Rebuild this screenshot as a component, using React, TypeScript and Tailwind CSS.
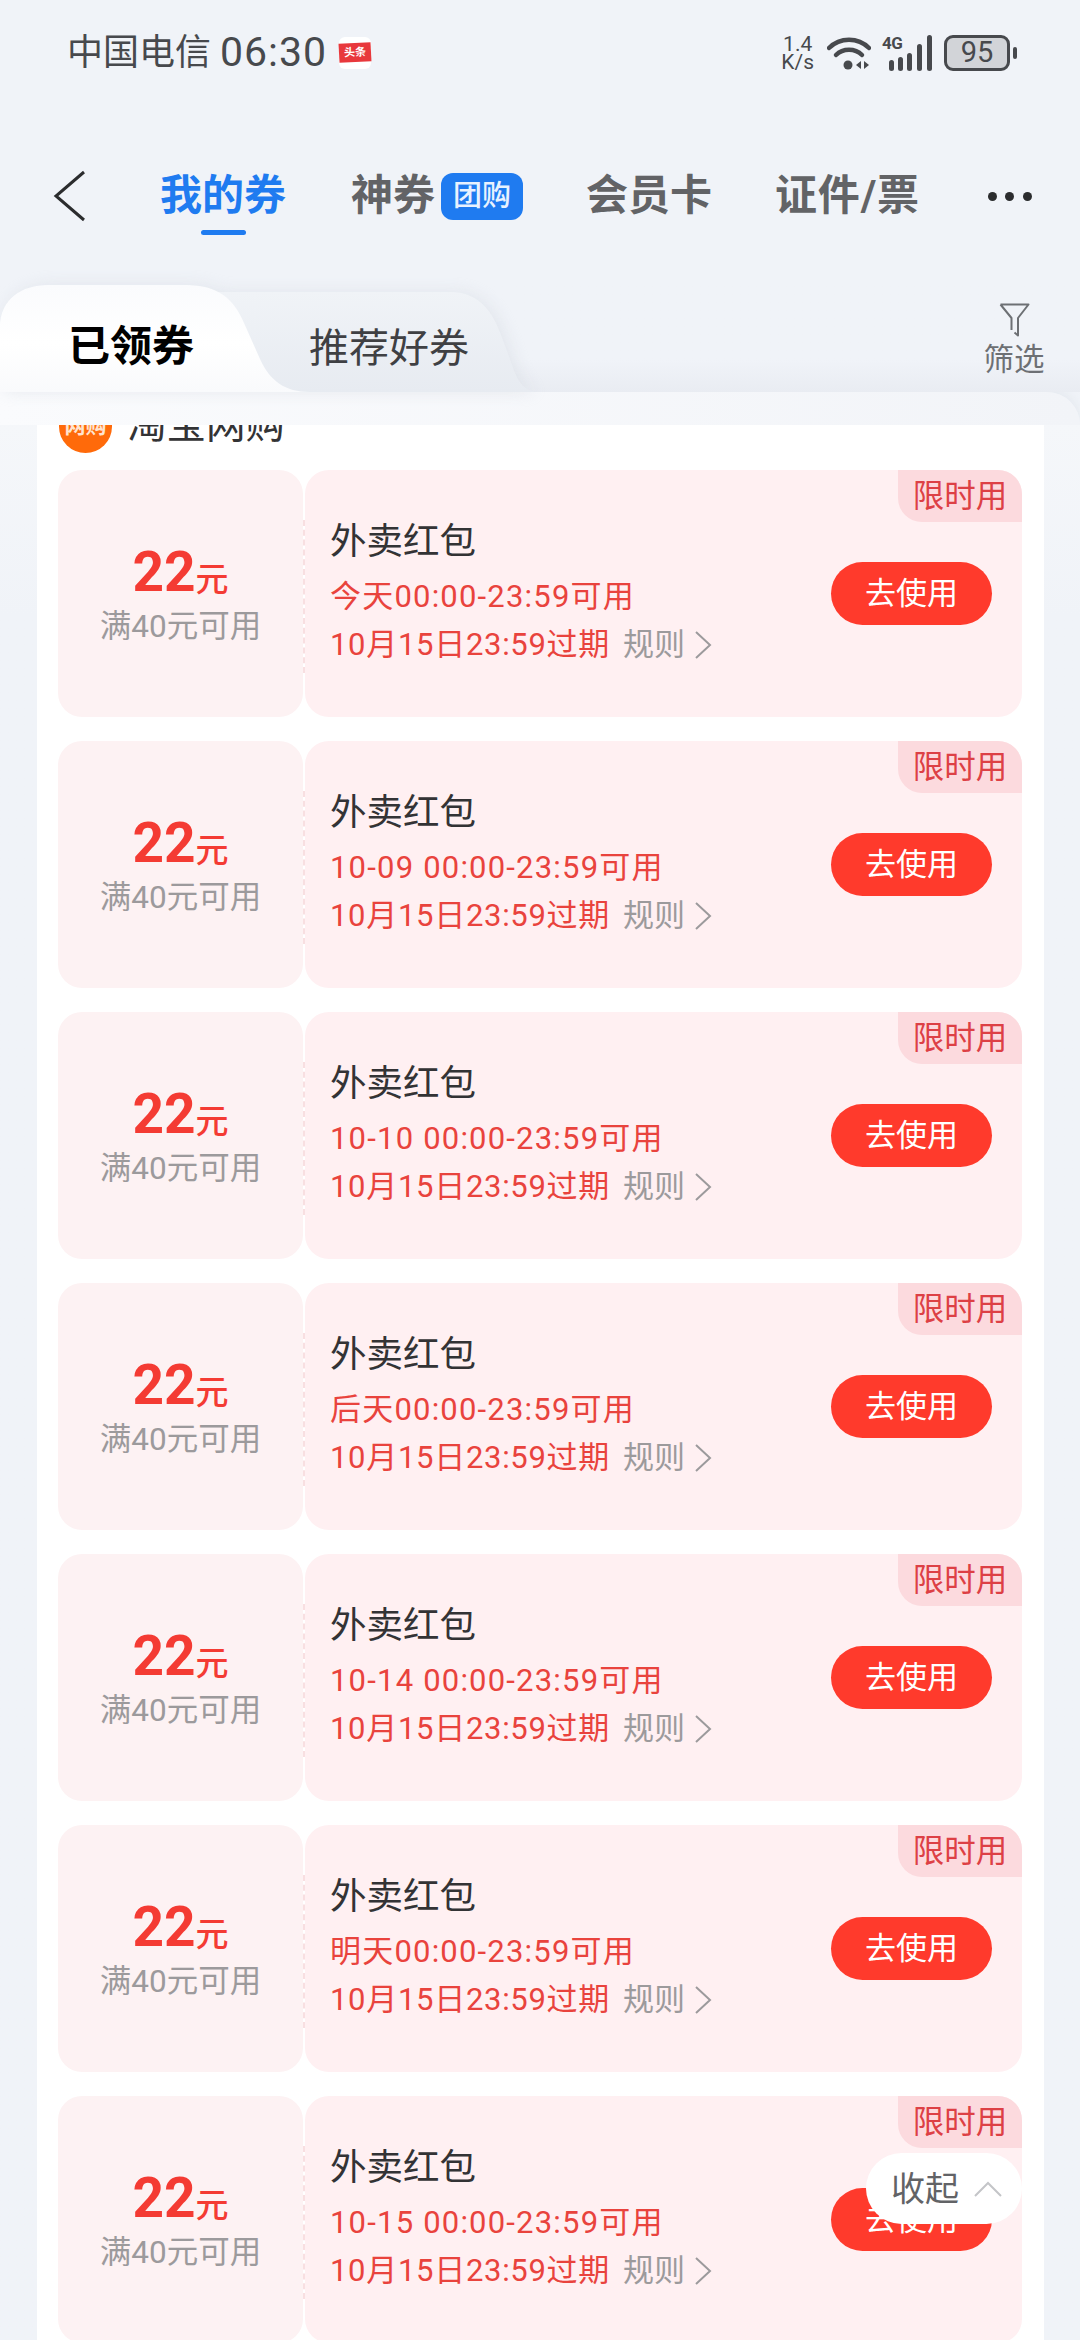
const coupons = [
  "今天00:00-23:59可用",
  "10-09 00:00-23:59可用",
  "10-10 00:00-23:59可用",
  "后天00:00-23:59可用",
  "10-14 00:00-23:59可用",
  "明天00:00-23:59可用",
  "10-15 00:00-23:59可用",
];

const StatusBar = () => (
  <div className="flex h-[105px] items-center pl-[67px] pr-[63px] text-[#47494d]">
    <span className="text-[36px] leading-none">中国电信</span>
    <span className="ml-[9px] text-[41px] leading-none tracking-[1px]">06:30</span>
    <div className="ml-[12px] flex h-[32px] w-[32px] items-center rounded-[6px] bg-white">
      <span className="flex h-[19px] w-full -rotate-3 items-center justify-center bg-[#e8383c] text-[11px] font-bold leading-none text-white">
        头条
      </span>
    </div>
    <div className="ml-auto flex flex-col items-center text-[21px] leading-[18px]">
      <span>1.4</span>
      <span>K/s</span>
    </div>
    <svg className="ml-[13px] h-[36px] w-[44px]" viewBox="0 0 44 36" fill="none">
      <path d="M2 13C13 2 31 2 42 13" stroke="#47494d" strokeWidth="4.5" strokeLinecap="round" />
      <path d="M9 20C16 13 28 13 35 20" stroke="#47494d" strokeWidth="4.5" strokeLinecap="round" />
      <circle cx="21" cy="30" r="4.5" fill="#47494d" />
      <path d="M34 26V34L29 30ZM37 26V34L42 30Z" fill="#47494d" />
    </svg>
    <div className="relative ml-[11px] h-[36px] w-[50px]">
      <span className="absolute left-0 top-0 text-[17px] font-bold leading-[17px] tracking-[-0.5px]">4G</span>
      <svg className="h-full w-full" viewBox="0 0 50 36" fill="#47494d">
        <rect x="7" y="25" width="5" height="11" rx="2.5" />
        <rect x="16" y="22" width="5" height="14" rx="2.5" />
        <rect x="25" y="18" width="5" height="18" rx="2.5" />
        <rect x="35" y="9" width="5" height="27" rx="2.5" />
        <rect x="45" y="0" width="5" height="36" rx="2.5" />
      </svg>
    </div>
    <div className="ml-[12px] flex h-[36px] w-[66px] items-center justify-center rounded-[9px] border-[3px] border-[#47494d] bg-[#d2d4d8] text-[29px] leading-none">
      95
    </div>
    <span className="ml-[3px] h-[12px] w-[4px] rounded-[2px] bg-[#47494d]" />
  </div>
);

const TopNav = () => (
  <div className="relative flex h-[90px] items-center pt-[2px] text-[42px] font-bold leading-none text-[#626366]">
    <svg className="ml-[53px] h-[52px] w-[34px]" viewBox="0 0 34 52" fill="none">
      <path d="M31 2L3 26L31 50" stroke="#2b2c2e" strokeWidth="3" />
    </svg>
    <span className="relative ml-[73px] text-[#1f7bf0]">
      我的券
      <span className="absolute left-[41px] top-[55px] h-[5px] w-[45px] rounded-[3px] bg-[#1f7bf0]" />
    </span>
    <span className="ml-[65px]">神券</span>
    <span className="ml-[6px] flex h-[47px] w-[82px] items-center justify-center rounded-[12px] bg-[#1f7bf0] text-[29px] font-medium text-[#e8f2ff]">
      团购
    </span>
    <span className="ml-[63px]">会员卡</span>
    <span className="ml-[63px] tracking-[0.8px]">证件/票</span>
    <div className="ml-[68px] flex gap-[8.5px]">
      <span className="h-[9px] w-[9px] rounded-full bg-[#2b2c2e]" />
      <span className="h-[9px] w-[9px] rounded-full bg-[#2b2c2e]" />
      <span className="h-[9px] w-[9px] rounded-full bg-[#2b2c2e]" />
    </div>
  </div>
);

const TabHeader = () => (
  <div className="relative h-[107px] bg-gradient-to-b from-[#f0f3f8] via-[#f0f3f8] via-70% to-[#e9ecf2]">
    <svg className="absolute left-0 top-0 h-[107px] w-[560px] drop-shadow-[4px_0_8px_rgba(200,206,216,0.35)]" viewBox="0 0 560 107" fill="none">
      <defs>
        <linearGradient id="tabOff" x1="0" y1="0" x2="0" y2="1">
          <stop offset="0" stopColor="#f0f3f7" />
          <stop offset="1" stopColor="#e7ebf1" />
        </linearGradient>
        <linearGradient id="tabOn" x1="0" y1="0" x2="0" y2="1">
          <stop offset="0" stopColor="#fafbfd" />
          <stop offset="0.55" stopColor="#ffffff" />
          <stop offset="1" stopColor="#f9fafc" />
        </linearGradient>
      </defs>
      <path d="M190 7H450C478 7 492 25 501 50L515 88C519 98 525 105 535 107H190Z" fill="url(#tabOff)" />
      <path d="M0 107V42C0 14 22 0 48 0H186C218 0 234 14 244 38L260 74C270 96 285 107 310 107Z" fill="url(#tabOn)" />
    </svg>
    <div className="absolute left-[68px] top-[35px] text-[42px] font-bold leading-[54px] text-black">已领券</div>
    <div className="absolute left-[309px] top-[37px] text-[40px] leading-[54px] text-[#3f4043]">推荐好券</div>
    <div className="absolute left-[983px] top-[18px] flex w-[62px] flex-col items-center text-[#6d7074]">
      <svg className="h-[34px] w-[31px]" viewBox="0 0 30 34" fill="none">
        <path d="M1 1.5H29L18.5 15V32.5L15 29.5 M1 1.5L12 15V27" stroke="#6d7074" strokeWidth="2" strokeLinejoin="round" />
      </svg>
      <span className="mt-[5px] text-[30.5px] leading-[36px]">筛选</span>
    </div>
  </div>
);

const CouponCard = ({ when }: { when: string }) => (
  <div className="flex h-[247px] shrink-0">
    <div className="flex w-[245px] flex-col items-center rounded-[24px] bg-[#fdf2f3] pt-[72px]">
      <div className="flex h-[60px] items-baseline font-medium text-[#f43b33]">
        <span className="text-[55px] font-bold leading-[60px]">22</span>
        <span className="text-[33px] leading-[60px]">元</span>
      </div>
      <div className="mt-[5px] text-[31.5px] leading-[40px] text-[#9c9a9c]">满40元可用</div>
    </div>
    <div className="relative ml-[2px] flex flex-1 items-center rounded-[24px] bg-[#fff0f2] pl-[25px] pr-[30px]">
      <span className="absolute left-[-2px] top-[50px] h-[153px] border-l-2 border-dashed border-[#f8dfe1]" />
      <span className="absolute right-0 top-0 flex h-[52px] w-[124px] items-center justify-center rounded-bl-[24px] rounded-tr-[24px] bg-[#fcdade] pt-[2px] text-[31.5px] leading-none text-[#dd4045]">
        限时用
      </span>
      <div className="flex flex-col pb-[3px]">
        <div className="text-[36.5px] leading-[50px] text-[#333335]">外卖红包</div>
        <div className="mt-[4px] text-[31px] leading-[52px] tracking-[1.2px] text-[#e9433d]">{when}</div>
        <div className="flex h-[44px] items-center text-[31px] leading-[44px] tracking-[0.7px] text-[#e9433d]">
          10月15日23:59过期
          <span className="ml-[13px] tracking-normal text-[#9c9a9c]">规则</span>
          <svg className="ml-[9px] h-[30px] w-[18px]" viewBox="0 0 18 30" fill="none">
            <path d="M2 2L16 15L2 28" stroke="#9c9a9c" strokeWidth="2" />
          </svg>
        </div>
      </div>
      <button className="ml-auto flex h-[63px] w-[161px] items-center justify-center rounded-full bg-[#ff3a2c] text-[31px] leading-none text-white">
        去使用
      </button>
    </div>
  </div>
);

const App = () => (
  <div className="relative h-[2340px] w-[1080px] overflow-hidden bg-[#f0f3f8] font-['Roboto','Noto_Sans_CJK_SC',sans-serif]">
    <StatusBar />
    <div className="h-[45px]" />
    <TopNav />
    <div className="h-[45px]" />
    <TabHeader />
    <div className="h-[33px] rounded-tr-[35px] bg-gradient-to-r from-[#fafbfd] to-[#f2f4f8] shadow-[0_-4px_10px_rgba(200,206,216,0.25)]" />
    <div className="bg-gradient-to-b from-[#f5f7fa] to-[#f0f3f8] to-[10%] pl-[37px]">
      <div className="w-[1007px] overflow-hidden bg-white pl-[21px] pr-[22px]">
        <div className="-mt-[25px] flex h-[70px] items-start">
          <div className="ml-px flex h-[53px] w-[53px] items-center justify-center rounded-full bg-[#ff6a0a] text-[21px] font-bold leading-none text-[#ffe4cf]">
            网购
          </div>
          <div className="ml-[15px] mt-[3px] text-[39.5px] leading-[44px] text-[#333335]">淘宝网购</div>
        </div>
        <div className="flex flex-col gap-[24px]">
          {coupons.map((when) => (
            <CouponCard key={when} when={when} />
          ))}
        </div>
      </div>
    </div>
    <div className="absolute left-[866px] top-[2153px] flex h-[71px] w-[156px] items-center rounded-full bg-white pl-[25px] text-[34px] leading-none text-[#626366]">
      收起
      <svg className="ml-[14px] h-[18px] w-[30px]" viewBox="0 0 30 18" fill="none">
        <path d="M2 16L15 3L28 16" stroke="#c4c5c8" strokeWidth="2" />
      </svg>
    </div>
  </div>
);

export default App;
